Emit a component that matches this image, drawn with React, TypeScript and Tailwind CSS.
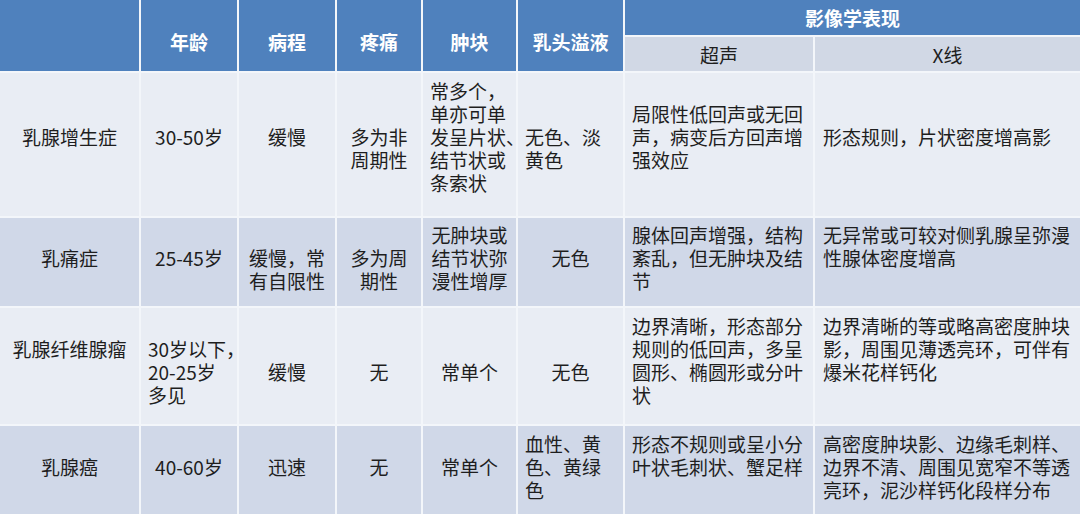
import React from 'react'

type Cell = { lines: string[]; left?: boolean }

// header labels for the first six columns (each spans both header rows)
const headLabels = ['', '年龄', '病程', '疼痛', '肿块', '乳头溢液']

// left padding per column when the cell text is left-aligned
const colPad = ['', 'pl-[7px]', '', '', 'pl-[7px]', 'pl-[7px]', 'pl-[7px]', 'pl-[8px]']

const rows: { bg: string; pad: string; cells: Cell[] }[] = [
  {
    bg: 'bg-[#e9edf4]',
    pad: 'pb-[17px]',
    cells: [
      { lines: ['乳腺增生症'] },
      { lines: ['30-50岁'] },
      { lines: ['缓慢'] },
      { lines: ['', '多为非', '周期性'] },
      { lines: ['常多个，', '单亦可单', '发呈片状、', '结节状或', '条索状'], left: true },
      { lines: ['', '无色、淡', '黄色'], left: true },
      { lines: ['局限性低回声或无回', '声，病变后方回声增', '强效应'], left: true },
      { lines: ['形态规则，片状密度增高影'], left: true },
    ],
  },
  {
    bg: 'bg-[#d0d8e8]',
    pad: 'pb-[10px]',
    cells: [
      { lines: ['乳痛症'] },
      { lines: ['25-45岁'] },
      { lines: ['', '缓慢，常', '有自限性'] },
      { lines: ['', '多为周', '期性'] },
      { lines: ['无肿块或', '结节状弥', '漫性增厚'] },
      { lines: ['无色'] },
      { lines: ['腺体回声增强，结构', '紊乱，但无肿块及结', '节'], left: true },
      { lines: ['无异常或可较对侧乳腺呈弥漫', '性腺体密度增高', ''], left: true },
    ],
  },
  {
    bg: 'bg-[#e9edf4]',
    pad: 'pt-[10px]',
    cells: [
      { lines: ['乳腺纤维腺瘤', '', ''] },
      { lines: ['30岁以下，', '20-25岁', '多见'], left: true },
      { lines: ['缓慢'] },
      { lines: ['无'] },
      { lines: ['常单个'] },
      { lines: ['无色'] },
      { lines: ['边界清晰，形态部分', '规则的低回声，多呈', '圆形、椭圆形或分叶', '状', ''], left: true },
      { lines: ['边界清晰的等或略高密度肿块', '影，周围见薄透亮环，可伴有', '爆米花样钙化', '', ''], left: true },
    ],
  },
  {
    bg: 'bg-[#d0d8e8]',
    pad: 'pb-[8px]',
    cells: [
      { lines: ['乳腺癌'] },
      { lines: ['40-60岁'] },
      { lines: ['迅速'] },
      { lines: ['无'] },
      { lines: ['常单个'] },
      { lines: ['血性、黄', '色、黄绿', '色'], left: true },
      { lines: ['形态不规则或呈小分', '叶状毛刺状、蟹足样', ''], left: true },
      { lines: ['高密度肿块影、边缘毛刺样、', '边界不清、周围见宽窄不等透', '亮环，泥沙样钙化段样分布'], left: true },
    ],
  },
]

export default function App() {
  return (
    <div className="w-[1080px] h-[514px] overflow-hidden bg-white font-['Noto_Sans_CJK_SC','Liberation_Sans',sans-serif] text-[19px] leading-[23px] text-[#1e1e1e]">
      <div className="grid grid-cols-[139px_96px_96px_84px_93px_105px_188px_265px] grid-rows-[35px_34px_143px_88px_116px_88px] gap-[2px] bg-[#f3f6fa]">
        {/* header */}
        {headLabels.map((label, i) => (
          <div key={i} className="row-span-2 flex items-center justify-center pt-[12px] bg-[#4f81bd] text-white font-bold whitespace-nowrap">
            {label}
          </div>
        ))}
        <div className="col-span-2 flex items-center justify-center bg-[#4f81bd] text-white font-bold">影像学表现</div>
        <div className="flex items-center justify-center bg-[#d1d8e5]">超声</div>
        <div className="flex items-center justify-center bg-[#d1d8e5]">X线</div>

        {/* body */}
        {rows.map((row, r) =>
          row.cells.map((cell, c) => (
            <div
              key={`${r}-${c}`}
              className={`flex items-center ${row.bg} ${row.pad} ${cell.left ? `justify-start text-left ${colPad[c]}` : 'justify-center text-center'}`}
            >
              <div>
                {cell.lines.map((line, k) => (
                  <div key={k} className="whitespace-nowrap">
                    {line || '\u00a0'}
                  </div>
                ))}
              </div>
            </div>
          ))
        )}
      </div>
    </div>
  )
}
